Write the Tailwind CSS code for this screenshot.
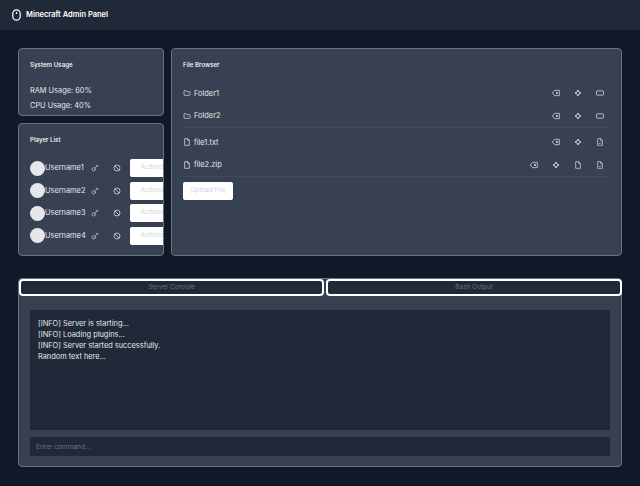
<!DOCTYPE html>
<html lang="en">
<head>
  <meta charset="UTF-8">
  <title>Minecraft Admin Panel</title>
  <script src="https://cdn.jsdelivr.net/npm/@tailwindcss/browser@4"></script>
</head>
<body class="bg-[#111827] w-[640px] h-[486px] overflow-hidden font-['Inter',sans-serif] antialiased text-[#e5e7eb]">
  <svg width="0" height="0" class="absolute">
    <defs>
      <symbol id="folder" viewBox="0 0 24 24" fill="none" stroke="currentColor" stroke-width="2" stroke-linejoin="round"><path d="M3 6.500A1.500 1.500 0 0 1 4.500 5H9l2.500 3h8A1.500 1.500 0 0 1 21 9.500v8a1.500 1.500 0 0 1-1.500 1.500h-15A1.500 1.500 0 0 1 3 17.500z"/></symbol>
      <symbol id="file" viewBox="0 0 24 24" fill="none" stroke="currentColor" stroke-width="2.200" stroke-linejoin="round"><path d="M5 2h9l5 5v15H5z"/><path d="M14 2v5h5"/></symbol>
      <symbol id="filecheck" viewBox="0 0 24 24" fill="none" stroke="currentColor" stroke-width="2.200" stroke-linejoin="round"><path d="M5 2h9l5 5v15H5z"/><path d="M14 2v5h5"/><path d="M8.500 15l2.500 2.500 4.500-4.500"/></symbol>
      <symbol id="erase" viewBox="0 0 24 24" fill="none" stroke="currentColor" stroke-width="2.400" stroke-linejoin="round"><path d="M8 4h14v16H8l-7-8z"/><path d="M12 9l6 6M18 9l-6 6"/></symbol>
      <symbol id="bolt" viewBox="0 0 24 24" fill="none" stroke="currentColor" stroke-width="3" stroke-linejoin="round"><path d="M12 3l3 6 6 3-6 3-3 6-3-6-6-3 6-3z"/></symbol>
      <symbol id="rect" viewBox="0 0 24 24" fill="none" stroke="currentColor" stroke-width="2.400" stroke-linejoin="round"><rect x="1.500" y="5.500" width="21" height="13" rx="1.500"/></symbol>
      <symbol id="key" viewBox="0 0 24 24" fill="none" stroke="currentColor" stroke-width="2" stroke-linecap="round"><circle cx="8" cy="16" r="5"/><path d="M12 12l8-8M16 5l3 3M19 3l2 2"/></symbol>
      <symbol id="ban" viewBox="0 0 24 24" fill="none" stroke="currentColor" stroke-width="2.400"><circle cx="12" cy="12" r="9"/><path d="M5.600 5.600l12.800 12.800"/></symbol>
    </defs>
  </svg>

  <header class="h-[30px] bg-[#1f2937] flex items-center pl-[12px] gap-[5px]">
    <svg class="w-[9px] h-[12px] text-white" viewBox="0 0 9 12" fill="none" stroke="currentColor" stroke-width="1.200"><rect x="0.800" y="0.800" width="7.400" height="10.400" rx="3.700"/><path d="M4.500 3v2"/></svg>
    <h1 class="text-[7.500px] font-semibold text-white">Minecraft Admin Panel</h1>
  </header>

  <main class="px-[18px] pt-[18px]">
    <div class="flex gap-[7px] h-[208px]">
      <div class="w-[146px] flex flex-col gap-[7px]">
        <section class="h-[68px] bg-[#374151] border border-[#6b7280] rounded-[4px] px-[11px] pt-[11px]">
          <h2 class="text-[6.200px] leading-[10px] font-medium text-white">System Usage</h2>
          <p class="text-[7.400px] leading-[15px] mt-[13px]">RAM Usage: 60%</p>
          <p class="text-[7.400px] leading-[15px]">CPU Usage: 40%</p>
        </section>
        <section class="flex-1 bg-[#374151] border border-[#6b7280] rounded-[4px] pl-[11px] pt-[11px] overflow-hidden">
          <h2 class="text-[6.200px] leading-[10px] font-medium text-white">Player List</h2>
          <ul class="mt-[14px] flex flex-col gap-[4.500px]">
            <li class="flex items-center h-[18px]"><span class="w-[15px] h-[15px] rounded-full bg-[#e5e7eb] shrink-0"></span><span class="text-[7.400px] w-[46px] shrink-0">Username1</span><svg class="w-[8px] h-[8px] shrink-0 text-[#d1d5db]"><use href="#key"/></svg><svg class="w-[8px] h-[8px] shrink-0 ml-[14px] text-[#d1d5db]"><use href="#ban"/></svg><button class="ml-[9px] w-[44px] h-[18px] shrink-0 bg-white rounded-[2px] text-[6.500px] text-[#d1d5db]">Actions</button></li>
            <li class="flex items-center h-[18px]"><span class="w-[15px] h-[15px] rounded-full bg-[#e5e7eb] shrink-0"></span><span class="text-[7.400px] w-[46px] shrink-0">Username2</span><svg class="w-[8px] h-[8px] shrink-0 text-[#d1d5db]"><use href="#key"/></svg><svg class="w-[8px] h-[8px] shrink-0 ml-[14px] text-[#d1d5db]"><use href="#ban"/></svg><button class="ml-[9px] w-[44px] h-[18px] shrink-0 bg-white rounded-[2px] text-[6.500px] text-[#d1d5db]">Actions</button></li>
            <li class="flex items-center h-[18px]"><span class="w-[15px] h-[15px] rounded-full bg-[#e5e7eb] shrink-0"></span><span class="text-[7.400px] w-[46px] shrink-0">Username3</span><svg class="w-[8px] h-[8px] shrink-0 text-[#d1d5db]"><use href="#key"/></svg><svg class="w-[8px] h-[8px] shrink-0 ml-[14px] text-[#d1d5db]"><use href="#ban"/></svg><button class="ml-[9px] w-[44px] h-[18px] shrink-0 bg-white rounded-[2px] text-[6.500px] text-[#d1d5db]">Actions</button></li>
            <li class="flex items-center h-[18px]"><span class="w-[15px] h-[15px] rounded-full bg-[#e5e7eb] shrink-0"></span><span class="text-[7.400px] w-[46px] shrink-0">Username4</span><svg class="w-[8px] h-[8px] shrink-0 text-[#d1d5db]"><use href="#key"/></svg><svg class="w-[8px] h-[8px] shrink-0 ml-[14px] text-[#d1d5db]"><use href="#ban"/></svg><button class="ml-[9px] w-[44px] h-[18px] shrink-0 bg-white rounded-[2px] text-[6.500px] text-[#d1d5db]">Actions</button></li>
          </ul>
        </section>
      </div>

      <section class="w-[451px] bg-[#374151] border border-[#6b7280] rounded-[4px] px-[11px] pt-[11px]">
        <h2 class="text-[6.200px] leading-[10px] font-medium text-white">File Browser</h2>
        <ul class="mt-[12px] border-b border-[#414b5a]">
          <li class="flex items-center h-[22.500px] text-[7.400px]"><svg class="w-[8px] h-[8px] mr-[3px]"><use href="#folder"/></svg>Folder1<div class="ml-auto flex gap-[14px] pr-[6px] text-[#d1d5db]"><svg class="w-[8px] h-[8px]"><use href="#erase"/></svg><svg class="w-[8px] h-[8px]"><use href="#bolt"/></svg><svg class="w-[8px] h-[8px]"><use href="#rect"/></svg></div></li>
          <li class="flex items-center h-[22.500px] text-[7.400px]"><svg class="w-[8px] h-[8px] mr-[3px]"><use href="#folder"/></svg>Folder2<div class="ml-auto flex gap-[14px] pr-[6px] text-[#d1d5db]"><svg class="w-[8px] h-[8px]"><use href="#erase"/></svg><svg class="w-[8px] h-[8px]"><use href="#bolt"/></svg><svg class="w-[8px] h-[8px]"><use href="#rect"/></svg></div></li>
        </ul>
        <ul class="mt-[3px] border-b border-[#414b5a]">
          <li class="flex items-center h-[22.500px] text-[7.400px]"><svg class="w-[8px] h-[8px] mr-[3px]"><use href="#file"/></svg>file1.txt<div class="ml-auto flex gap-[14px] pr-[6px] text-[#d1d5db]"><svg class="w-[8px] h-[8px]"><use href="#erase"/></svg><svg class="w-[8px] h-[8px]"><use href="#bolt"/></svg><svg class="w-[8px] h-[8px]"><use href="#filecheck"/></svg></div></li>
          <li class="flex items-center h-[22.500px] text-[7.400px]"><svg class="w-[8px] h-[8px] mr-[3px]"><use href="#file"/></svg>file2.zip<div class="ml-auto flex gap-[14px] pr-[6px] text-[#d1d5db]"><svg class="w-[8px] h-[8px]"><use href="#erase"/></svg><svg class="w-[8px] h-[8px]"><use href="#bolt"/></svg><svg class="w-[8px] h-[8px]"><use href="#file"/></svg><svg class="w-[8px] h-[8px]"><use href="#filecheck"/></svg></div></li>
        </ul>
        <button class="block mt-[5px] w-[50px] h-[18px] bg-white rounded-[2px] text-[6.500px] text-[#d1d5db]">Upload File</button>
      </section>
    </div>

    <section class="mt-[22px] h-[189px] bg-[#374151] border border-[#6b7280] rounded-[4px] relative">
      <div class="flex gap-[2px] absolute left-[0px] right-[-1px] top-[0px]">
        <button class="w-[305px] shrink-0 h-[17px] bg-[#1f2937] border-2 border-white rounded-[4px] text-[6.400px] text-[#6b7280]">Server Console</button>
        <button class="flex-1 h-[17px] bg-[#1f2937] border-2 border-white rounded-[4px] text-[6.400px] text-[#6b7280]">Bash Output</button>
      </div>
      <div class="px-[11px] pt-[31px]">
        <div class="h-[120px] bg-[#1f2937] px-[8px] pt-[8px] text-[7.400px] leading-[11px] text-[#e5e7eb]">
          <p>[INFO] Server is starting...</p>
          <p>[INFO] Loading plugins...</p>
          <p>[INFO] Server started successfully.</p>
          <p>Random text here...</p>
        </div>
        <input class="mt-[7px] w-full h-[19px] bg-[#1f2937] px-[6px] text-[6.600px] text-[#e5e7eb] placeholder:text-[#6b7280] outline-none" placeholder="Enter command...">
      </div>
    </section>
  </main>
</body>
</html>
